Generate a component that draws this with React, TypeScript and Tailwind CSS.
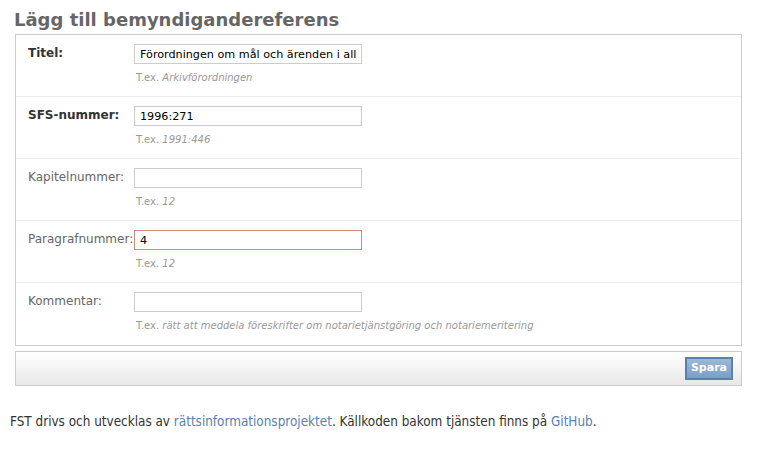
export default function App() {
  const rows = [
    { label: "Titel:", required: true, value: "Förordningen om mål och ärenden i allmän domstol", help: "Arkivförordningen" },
    { label: "SFS-nummer:", required: true, value: "1996:271", help: "1991:446" },
    { label: "Kapitelnummer:", required: false, value: "", help: "12" },
    { label: "Paragrafnummer:", required: false, value: "4", help: "12", focus: true },
    {
      label: "Kommentar:",
      required: false,
      value: "",
      help: "rätt att meddela föreskrifter om notarietjänstgöring och notariemeritering",
    },
  ];

  return (
    <div className="w-[766px] h-[458px] bg-white font-['DejaVu_Sans',sans-serif] text-[12px] text-[#333]">
      <div className="pl-[15px] pr-[24px] pt-[8px]">
        <h1 className="text-[18px] leading-[24px] font-bold text-[#666] -ml-[1px]">
          Lägg till bemyndigandereferens
        </h1>
        <div className="mt-[2px] border border-[#ccc]">
          {rows.map((r, i) => (
            <div
              key={r.label}
              className={`flex pl-[12px] pt-[9px] h-[62px] ${i < rows.length - 1 ? "border-b border-[#eee]" : ""}`}
            >
              <div
                className={`w-[106px] shrink-0 whitespace-nowrap leading-[16px] pt-[1px] ${r.required ? "font-bold text-[#333]" : "text-[#666]"}`}
              >
                {r.label}
              </div>
              <div>
                <input
                  readOnly
                  value={r.value}
                  className={`block w-[228px] h-[20px] px-[5px] pt-[1px] text-[11.2px] text-black font-['DejaVu_Sans',sans-serif] outline-none ${r.focus ? "border-[1.5px] border-[#c98d7a]" : "border border-[#ccc]"}`}
                />
                <p className="mt-[7px] ml-[2px] text-[10px] leading-[13px] text-[#999] whitespace-nowrap">
                  T.ex. <em>{r.help}</em>
                </p>
              </div>
            </div>
          ))}
        </div>
        <div className="mt-[5px] h-[35px] border border-[#ccc] bg-gradient-to-b from-white to-[#e8e8e8] flex items-center justify-end pr-[8px]">
          <button className="h-[23px] px-[4px] border-2 border-[#5b80b2] bg-gradient-to-b from-[#9db8d8] to-[#7c9ec6] text-white font-bold text-[11px]">
            Spara
          </button>
        </div>
      </div>
      <p className="mt-[26px] pl-[10px] font-['DejaVu_Sans_Condensed','DejaVu_Sans',sans-serif] text-[13.4px] text-[#333]">
        FST drivs och utvecklas av <a className="text-[#5b80b2]">rättsinformationsprojektet</a>. Källkoden bakom tjänsten finns på{" "}
        <a className="text-[#5b80b2]">GitHub</a>.
      </p>
    </div>
  );
}
